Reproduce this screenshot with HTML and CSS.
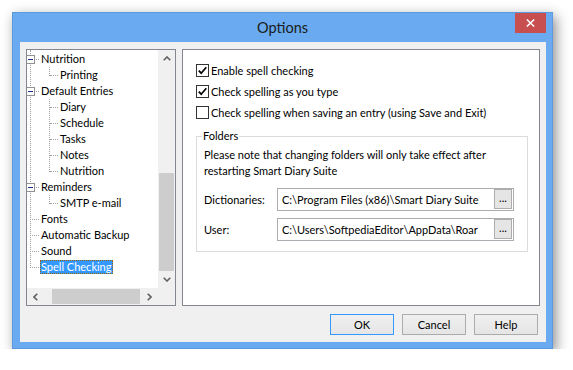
FILE: index.html
```html
<!DOCTYPE html>
<html>
<head>
<meta charset="utf-8">
<title>Options</title>
<link rel="stylesheet" href="styles.css">
</head>
<body>
<div class="window">
  <div class="titlebar">
    <span></span>
    <div class="title">Options</div>
    <div class="close"><svg width="9" height="8" viewBox="0 0 9 8"><path d="M0.8 0.5L8.2 7.5M8.2 0.5L0.8 7.5" stroke="#fff" stroke-width="1.5" fill="none"/></svg></div>
  </div>
  <div class="client">
    <div class="panels">
      <div class="treebox">
        <div class="tree">
          <div class="row l0"><i class="exp"></i><span>Nutrition</span></div>
          <div class="kids k1">
            <div class="row l1"><span>Printing</span></div>
          </div>
          <div class="row l0"><i class="exp"></i><span>Default Entries</span></div>
          <div class="kids k5">
            <div class="row l1"><span>Diary</span></div>
            <div class="row l1"><span>Schedule</span></div>
            <div class="row l1"><span>Tasks</span></div>
            <div class="row l1"><span>Notes</span></div>
            <div class="row l1"><span>Nutrition</span></div>
          </div>
          <div class="row l0"><i class="exp"></i><span>Reminders</span></div>
          <div class="kids k1">
            <div class="row l1"><span>SMTP e-mail</span></div>
          </div>
          <div class="row l0"><span>Fonts</span></div>
          <div class="row l0"><span>Automatic Backup</span></div>
          <div class="row l0"><span>Sound</span></div>
          <div class="row l0"><span class="sel">Spell Checking</span></div>
        </div>
        <div class="vscroll">
          <div class="sbtn"><svg width="8" height="5" viewBox="0 0 8 5"><path d="M0.7 4.3L4 1L7.3 4.3" stroke="#606060" stroke-width="1.6" fill="none"/></svg></div>
          <div class="vtrack"><div class="vthumb"></div></div>
          <div class="sbtn"><svg width="8" height="5" viewBox="0 0 8 5"><path d="M0.7 0.7L4 4L7.3 0.7" stroke="#606060" stroke-width="1.6" fill="none"/></svg></div>
        </div>
        <div class="hscroll">
          <div class="sbtn"><svg width="5" height="8" viewBox="0 0 5 8"><path d="M4.3 0.7L1 4L4.3 7.3" stroke="#606060" stroke-width="1.6" fill="none"/></svg></div>
          <div class="htrack"><div class="hthumb"></div></div>
          <div class="sbtn"><svg width="5" height="8" viewBox="0 0 5 8"><path d="M0.7 0.7L4 4L0.7 7.3" stroke="#606060" stroke-width="1.6" fill="none"/></svg></div>
        </div>
        <div class="corner"></div>
      </div>
      <div class="page">
        <label class="check"><span class="box"><svg width="11" height="11" viewBox="0 0 11 11"><path d="M1.8 5.6L4.2 8.2L9.3 2.2" stroke="#000" stroke-width="1.7" fill="none"/></svg></span>Enable spell checking</label>
        <label class="check"><span class="box"><svg width="11" height="11" viewBox="0 0 11 11"><path d="M1.8 5.6L4.2 8.2L9.3 2.2" stroke="#000" stroke-width="1.7" fill="none"/></svg></span>Check spelling as you type</label>
        <label class="check"><span class="box"></span>Check spelling when saving an entry (using Save and Exit)</label>
        <fieldset class="group">
          <legend>Folders</legend>
          <p class="note">Please note that changing folders will only take effect after<br>restarting Smart Diary Suite</p>
          <div class="field first"><span class="lbl">Dictionaries:</span><div class="input"><span class="val">C:\Program Files (x86)\Smart Diary Suite</span><span class="dots">...</span></div></div>
          <div class="field"><span class="lbl">User:</span><div class="input"><span class="val">C:\Users\SoftpediaEditor\AppData\Roar</span><span class="dots">...</span></div></div>
        </fieldset>
      </div>
    </div>
    <div class="buttons">
      <div class="btn default">OK</div>
      <div class="btn">Cancel</div>
      <div class="btn">Help</div>
    </div>
  </div>
</div>
</body>
</html>
```
FILE: styles.css
```css
* { box-sizing: border-box; }
body {
  margin: 0;
  background: #fff;
  font-family: Lato, "Liberation Sans", sans-serif;
  font-size: 11px;
  color: #000;
}
.window {
  margin: 12px 0 0 12px;
  width: 541px;
  height: 337px;
  background: #69aaf0;
  border: 1px solid #5a98df;
  box-shadow: 3px 4px 12px rgba(0, 0, 0, 0.45);
  display: flex;
  flex-direction: column;
}
.titlebar {
  height: 29px;
  display: grid;
  grid-template-columns: 1fr auto 1fr;
}
.title {
  font-size: 14.5px;
  line-height: 29px;
  color: #1b1b1b;
}
.close {
  justify-self: end;
  margin-right: 6px;
  width: 31px;
  height: 20px;
  background: #c74f50;
  display: flex;
  align-items: center;
  justify-content: center;
}
.client {
  flex: 1;
  margin: 0 6px 6px 7px;
  background: #f0f0f0;
  padding: 7px 7px 7px 6px;
  display: flex;
  flex-direction: column;
}
.panels {
  display: flex;
  gap: 6px;
  height: 257px;
}
.treebox {
  width: 150px;
  border: 1px solid #828790;
  background: #fff;
  display: grid;
  grid-template-columns: 131px 17px;
  grid-template-rows: 238px 17px;
}
.tree {
  position: relative;
  overflow: hidden;
  padding-top: 1px;
}
.tree::before {
  content: "";
  position: absolute;
  left: 3px;
  top: 0;
  height: 218px;
  border-left: 1px dotted #a0a0a0;
}
.row {
  position: relative;
  height: 16px;
  line-height: 16px;
  white-space: nowrap;
}
.row span { padding: 0 1px; }
.l0 { padding-left: 13px; }
.l1 { padding-left: 32px; }
.l0::before, .l1::before {
  content: "";
  position: absolute;
  top: 8px;
  border-top: 1px dotted #a0a0a0;
}
.l0::before { left: 5px; width: 7px; }
.l1::before { left: 23px; width: 8px; }
.exp {
  position: absolute;
  left: -1px;
  top: 4px;
  width: 9px;
  height: 9px;
  border: 1px solid #919191;
  background: #fff;
  z-index: 1;
}
.exp::after {
  content: "";
  position: absolute;
  left: 1px;
  top: 3px;
  width: 5px;
  border-top: 1px solid #1e3287;
}
.kids { position: relative; }
.kids::before {
  content: "";
  position: absolute;
  left: 22px;
  top: 0;
  border-left: 1px dotted #a0a0a0;
}
.k1::before { height: 9px; }
.k5::before { height: 73px; }
.sel {
  display: inline-block;
  height: 14px;
  line-height: 14px;
  padding: 0 2px 0 1px !important;
  background: #3399ff;
  color: #fff;
  outline: 1px dotted #a06000;
  outline-offset: -1px;
}
.vscroll {
  background: #f0f0f0;
  display: flex;
  flex-direction: column;
}
.sbtn {
  width: 17px;
  height: 17px;
  flex: none;
  display: flex;
  align-items: center;
  justify-content: center;
}
.vtrack {
  flex: 1;
  padding-top: 106px;
}
.vthumb {
  height: 98px;
  margin: 0 1px;
  background: #cdcdcd;
}
.hscroll {
  background: #f0f0f0;
  display: flex;
}
.htrack {
  flex: 1;
  padding: 1px 0 0 8px;
}
.hthumb {
  width: 88px;
  height: 15px;
  background: #cdcdcd;
}
.corner { background: #f0f0f0; }
.page {
  flex: 1;
  border: 1px solid #828790;
  background: #fff;
  padding: 10px 11px 0 13px;
}
.check {
  display: flex;
  align-items: center;
  gap: 2px;
  height: 21px;
}
.box {
  width: 13px;
  height: 13px;
  border: 1px solid #333;
  background: #fff;
  display: flex;
  align-items: center;
  justify-content: center;
}
.group {
  margin: 5px 0 0 0;
  width: 332px;
  border: 1px solid #dcdcdc;
  padding: 0 7px 10px 7px;
  min-inline-size: 0;
}
.group legend {
  padding: 0 1px;
  margin-left: -2px;
  line-height: 16px;
}
.note {
  margin: 3px 0 0 0;
  line-height: 16px;
}
.field {
  display: flex;
  align-items: center;
  height: 23px;
  margin-top: 7px;
}
.field.first { margin-top: 9px; }
.lbl { width: 73px; flex: none; }
.input {
  width: 237px;
  height: 23px;
  border: 1px solid #abadb3;
  background: #fff;
  display: flex;
  padding-left: 4px;
}
.val {
  flex: 1;
  overflow: hidden;
  white-space: nowrap;
  line-height: 21px;
}
.dots {
  flex: none;
  width: 18px;
  height: 20px;
  margin-right: 1px;
  background: #e5e5e5;
  border: 1px solid #adadad;
  text-align: center;
  line-height: 16px;
}
.buttons {
  margin-top: 8px;
  display: flex;
  justify-content: flex-end;
  gap: 8px;
  padding-right: 1px;
}
.btn {
  width: 64px;
  height: 21px;
  border: 1px solid #acacac;
  background: linear-gradient(#f0f0f0, #e5e5e5);
  text-align: center;
  line-height: 19px;
}
.btn.default { border-color: #3399ff; }
```
